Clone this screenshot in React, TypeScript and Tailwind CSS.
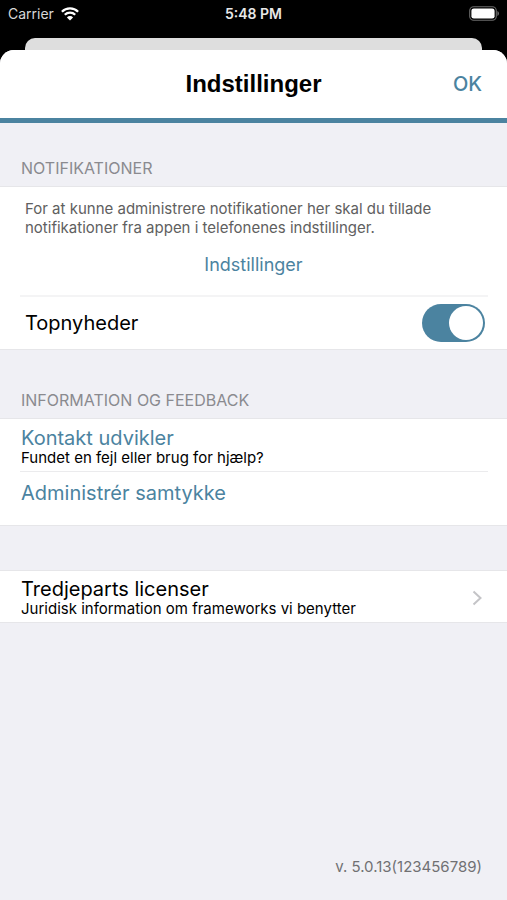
import { useState } from 'react';
import type { ReactNode } from 'react';

function WifiIcon() {
  return (
    <svg width="18" height="14" viewBox="0 0 18 14" fill="none" stroke="white" strokeWidth="2.3" aria-hidden="true">
      <path d="M0.9 4.7a11.5 11.5 0 0 1 16.2 0" />
      <path d="M3.8 7.8a7.4 7.4 0 0 1 10.4 0" />
      <path d="M9 13.6 5.9 10.4a4.4 4.4 0 0 1 6.2 0z" fill="white" stroke="none" />
    </svg>
  );
}

function BatteryIcon() {
  return (
    <svg width="30" height="15" viewBox="0 0 30 15" aria-hidden="true">
      <rect x="0.7" y="0.7" width="26.6" height="13.6" rx="4" fill="none" stroke="#6b6b6b" strokeWidth="1.1" />
      <rect x="2.4" y="2.4" width="23.2" height="10.2" rx="2.4" fill="white" />
      <path d="M28.4 5v5c1-.4 1.600-1.400 1.600-2.500S29.400 5.400 28.400 5z" fill="#6b6b6b" />
    </svg>
  );
}

function StatusBar() {
  return (
    <div className="grid h-[38px] grid-cols-3 items-start px-2 pt-[5px] text-sm leading-[18px] text-white">
      <div className="flex items-center gap-[7px]">
        <span className="text-[#d8d8d8]">Carrier</span>
        <WifiIcon />
      </div>
      <div className="text-center font-semibold text-[#e8e8e8]">5:48 PM</div>
      <div className="flex h-4 items-center justify-end">
        <BatteryIcon />
      </div>
    </div>
  );
}

function SectionTitle({ children }: { children: ReactNode }) {
  return <h2 className="px-[21px] pb-2 text-base leading-5 text-[#8a8a8f]">{children}</h2>;
}

export default function App() {
  const [topNews, setTopNews] = useState(true);

  return (
    <div className="flex min-h-screen flex-col bg-black font-['Inter',sans-serif]">
      <StatusBar />
      <div className="mx-[25px] h-3 rounded-t-[10px] bg-[#dedede]" />

      <div className="flex flex-1 flex-col overflow-hidden rounded-t-[14px] bg-[#f0f0f5]">
        <header className="grid h-[73px] grid-cols-[1fr_auto_1fr] items-center border-b-[5px] border-[#4b83a0] bg-white px-[25px]">
          <h1 className="col-start-2 font-['Liberation_Sans',sans-serif] text-2xl leading-8 font-bold text-black">Indstillinger</h1>
          <button type="button" className="cursor-pointer justify-self-end text-xl leading-7 font-medium text-[#4b83a0]">OK</button>
        </header>

        <section className="pt-[35px]">
          <SectionTitle>NOTIFIKATIONER</SectionTitle>
          <div className="border-y border-[#e6e6e9] bg-white">
            <p className="px-[25px] pt-3 text-[15px] leading-[19px] text-[#606060]">
              For at kunne administrere notifikationer her skal du tillade notifikationer fra appen i telefonenes indstillinger.
            </p>
            <div className="flex justify-center pt-4 pb-[18px]">
              <button type="button" className="cursor-pointer text-lg leading-6 text-[#4b83a0]">Indstillinger</button>
            </div>
            <label className="mr-[19px] ml-5 flex cursor-pointer items-center justify-between border-t-2 border-[#f4f4f5] py-[7px] pr-[3px] pl-[5px]">
              <span className="text-xl leading-7 text-black">Topnyheder</span>
              <span className="grid items-center">
                <input
                  type="checkbox"
                  role="switch"
                  checked={topNews}
                  onChange={(e) => setTopNews(e.target.checked)}
                  className="peer col-start-1 row-start-1 h-[38px] w-[63px] cursor-pointer appearance-none rounded-full bg-gray-300 transition checked:bg-[#4b83a0]"
                />
                <span className="pointer-events-none col-start-1 row-start-1 ml-[2px] size-[34px] rounded-full bg-white transition-all peer-checked:ml-[27px]" />
              </span>
            </label>
          </div>
        </section>

        <section className="pt-10">
          <SectionTitle>INFORMATION OG FEEDBACK</SectionTitle>
          <div className="border-y border-[#e6e6e9] bg-white">
            <button type="button" className="flex w-full cursor-pointer flex-col pt-2 pl-[21px] text-left">
              <span className="text-xl leading-[22px] text-[#4b83a0]">Kontakt udvikler</span>
              <span className="text-[15px] leading-[18px] text-black">Fundet en fejl eller brug for hjælp?</span>
            </button>
            <hr className="mt-1 mr-[19px] ml-5 border-[#ebebed]" />
            <button type="button" className="flex w-full cursor-pointer pt-[10px] pb-[21px] pl-[21px] text-left text-xl leading-[22px] text-[#4b83a0]">
              Administrér samtykke
            </button>
          </div>
        </section>

        <section className="pt-[44px]">
          <button type="button" className="flex w-full cursor-pointer items-center justify-between border-y border-[#e6e6e9] bg-white pt-[7px] pr-[25px] pb-1 pl-[21px] text-left">
            <span className="flex flex-col text-black">
              <span className="text-xl leading-[22px]">Tredjeparts licenser</span>
              <span className="text-[15px] leading-[18px]">Juridisk information om frameworks vi benytter</span>
            </span>
            <svg width="10" height="16" viewBox="0 0 10 16" fill="none" stroke="#c4c4c7" strokeWidth="2" aria-hidden="true">
              <path d="M1.500 1.500 8.500 8l-7 6.500" />
            </svg>
          </button>
        </section>

        <footer className="mt-auto px-[25px] pb-[23px] text-right text-[15px] leading-5 text-[#707073]">v. 5.0.13(123456789)</footer>
      </div>
    </div>
  );
}
